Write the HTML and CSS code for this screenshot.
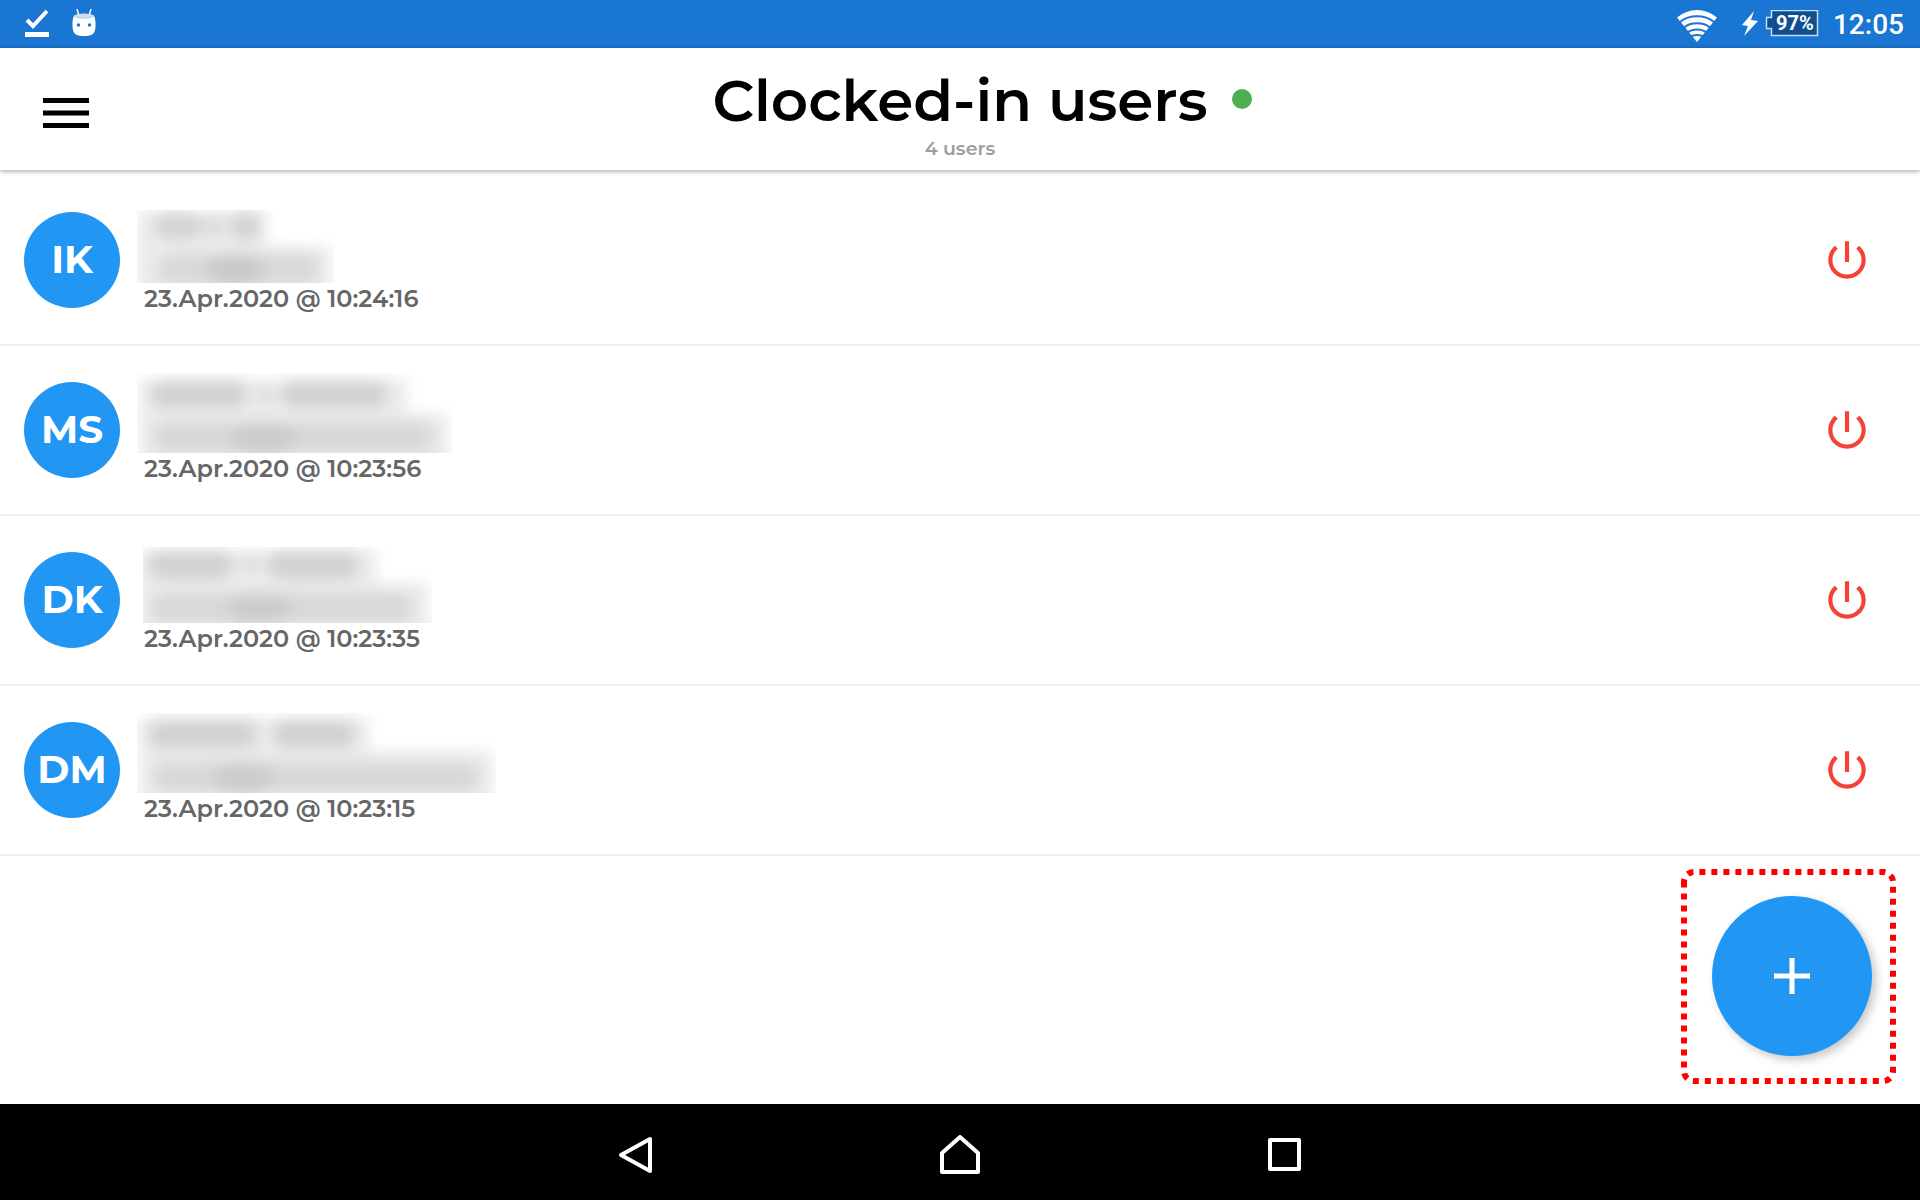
FILE: index.html
```html
<!DOCTYPE html>
<html lang="en">
<head>
<meta charset="utf-8">
<meta name="viewport" content="width=device-width, initial-scale=1">
<title>Clocked-in users</title>
<link rel="stylesheet" href="styles.css">
</head>
<body>
<div class="status-bar">
  <div class="status-group notifications">
    <svg width="24" height="28" viewBox="0 0 24 28" aria-hidden="true"><path d="M2 11l6 6L22 2" fill="none" stroke="#fff" stroke-width="4"/><path d="M0 23h24v5H0z" fill="#fff"/></svg>
    <svg width="24" height="28" viewBox="0 0 24 28" aria-hidden="true"><path d="M5 0l2 7M19 0l-2 7" stroke="#fff" stroke-width="1.5"/><path d="M3 6Q12 3 21 6Q23 7 23.500 13Q24 22 21 25Q18 27 12 27Q6 27 3 25Q0 22 .5 13Q1 7 3 6z" fill="#fff"/><ellipse cx="12" cy="7.500" rx="9.500" ry="2.500" fill="#c5dcf5"/><circle cx="6.500" cy="16" r="1.700" fill="#1976d2"/><circle cx="17.500" cy="16" r="1.700" fill="#1976d2"/></svg>
  </div>
  <div class="status-group system">
    <svg class="wifi" width="40" height="32" viewBox="0 0 40 32" aria-hidden="true"><path d="M20 32L0 7.500Q9 0 20 0t20 7.500z" fill="#fff"/><path d="M3 12Q10 6.300 20 6.300T37 12M7 17.500Q12 13.300 20 13.300T33 17.500M10 23Q14 19.500 20 19.500T30 23M13 27Q16 25 20 25T27 27" fill="none" stroke="#1976d2" stroke-width="2"/></svg>
    <svg class="bolt" width="16" height="26" viewBox="0 0 16 26" aria-hidden="true"><path d="M12 0L0 14l6 1L2 25 16 10l-7-1z" fill="#fff"/></svg>
    <div class="battery">
      <svg width="54" height="27" viewBox="0 0 54 27" aria-hidden="true"><path d="M6.500.5h46v25h-46v-7h-5v-11h5z" fill="#0f4f8f" stroke="#c5dcf5" stroke-width="1.500"/></svg>
      <span class="battery-level">97%</span>
    </div>
    <time class="clock">12:05</time>
  </div>
</div>

<header class="app-bar">
  <button class="icon-button menu" type="button" aria-label="Menu">
    <svg width="46" height="30" viewBox="0 0 46 30" aria-hidden="true"><path d="M0 0h46v5H0zM0 12.500h46v5H0zM0 25h46v5H0z"/></svg>
  </button>
  <h1 class="title">Clocked-in users</h1>
  <span class="online-dot" role="img" aria-label="Online"></span>
  <p class="subtitle">4 users</p>
</header>

<main class="content">
  <svg class="defs" width="0" height="0" aria-hidden="true"><filter id="soft" x="-20%" y="-40%" width="140%" height="180%" color-interpolation-filters="sRGB"><feGaussianBlur stdDeviation="7"/></filter></svg>
  <ul class="users">
    <li class="user">
      <span class="avatar">IK</span>
      <div class="details">
        <svg class="hidden-name" width="197" height="73" viewBox="0 0 197 73" role="img" aria-label="Name hidden"><g filter="url(#soft)"><path d="M0 0h130v36h64v50H0z" fill="#ebebeb"/><ellipse cx="42" cy="16" rx="26" ry="14" fill="#d4d4d4"/><ellipse cx="78" cy="16" rx="7" ry="12" fill="#d8d8d8"/><ellipse cx="108" cy="16" rx="15" ry="14" fill="#d2d2d2"/><rect x="20" y="44" width="162" height="30" rx="14" fill="#d9d9d9"/><ellipse cx="98" cy="60" rx="30" ry="16" fill="#cacaca"/></g></svg>
        <time class="stamp">23.Apr.2020 @ 10:24:16</time>
      </div>
      <button class="icon-button power" type="button" aria-label="Clock out IK"><svg width="50" height="50" viewBox="0 0 24 24" aria-hidden="true"><path d="M13 3h-2v10h2V3zm4.830 2.170l-1.420 1.420C17.990 7.860 19 9.810 19 12c0 3.870-3.130 7-7 7s-7-3.130-7-7c0-2.190 1.010-4.140 2.580-5.420L6.170 5.170C4.230 6.820 3 9.260 3 12c0 4.970 4.030 9 9 9s9-4.030 9-9c0-2.740-1.230-5.180-3.170-6.830z"/></svg></button>
    </li>
    <li class="user">
      <span class="avatar">MS</span>
      <div class="details">
        <svg class="hidden-name" width="315" height="80" viewBox="0 0 315 80" role="img" aria-label="Name hidden"><g filter="url(#soft)"><path d="M2 6h268v34h42v54H2z" fill="#ebebeb"/><rect x="14" y="7" width="96" height="28" rx="14" fill="#d2d2d2"/><ellipse cx="129" cy="21" rx="6" ry="9" fill="#d8d8d8"/><rect x="144" y="7" width="106" height="28" rx="14" fill="#d2d2d2"/><rect x="16" y="49" width="280" height="30" rx="14" fill="#d8d8d8"/><ellipse cx="126" cy="66" rx="34" ry="16" fill="#cccccc"/></g></svg>
        <time class="stamp">23.Apr.2020 @ 10:23:56</time>
      </div>
      <button class="icon-button power" type="button" aria-label="Clock out MS"><svg width="50" height="50" viewBox="0 0 24 24" aria-hidden="true"><path d="M13 3h-2v10h2V3zm4.830 2.170l-1.420 1.420C17.990 7.860 19 9.810 19 12c0 3.870-3.130 7-7 7s-7-3.130-7-7c0-2.190 1.010-4.140 2.580-5.420L6.170 5.170C4.230 6.820 3 9.260 3 12c0 4.970 4.030 9 9 9s9-4.030 9-9c0-2.740-1.230-5.180-3.170-6.830z"/></svg></button>
    </li>
    <li class="user">
      <span class="avatar">DK</span>
      <div class="details">
        <svg class="hidden-name inset" width="289" height="76" viewBox="0 0 289 76" role="img" aria-label="Name hidden"><g filter="url(#soft)"><path d="M-6 2h240v34h52v54H-6z" fill="#ebebeb"/><rect x="6" y="4" width="84" height="28" rx="14" fill="#d2d2d2"/><ellipse cx="107" cy="18" rx="6" ry="9" fill="#d8d8d8"/><rect x="124" y="4" width="92" height="28" rx="14" fill="#d2d2d2"/><rect x="8" y="46" width="262" height="30" rx="14" fill="#d8d8d8"/><ellipse cx="116" cy="62" rx="32" ry="16" fill="#cccccc"/></g></svg>
        <time class="stamp">23.Apr.2020 @ 10:23:35</time>
      </div>
      <button class="icon-button power" type="button" aria-label="Clock out DK"><svg width="50" height="50" viewBox="0 0 24 24" aria-hidden="true"><path d="M13 3h-2v10h2V3zm4.830 2.170l-1.420 1.420C17.990 7.860 19 9.810 19 12c0 3.870-3.130 7-7 7s-7-3.130-7-7c0-2.190 1.010-4.140 2.580-5.420L6.170 5.170C4.230 6.820 3 9.260 3 12c0 4.970 4.030 9 9 9s9-4.030 9-9c0-2.740-1.230-5.180-3.170-6.830z"/></svg></button>
    </li>
    <li class="user">
      <span class="avatar">DM</span>
      <div class="details">
        <svg class="hidden-name" width="359" height="80" viewBox="0 0 359 80" role="img" aria-label="Name hidden"><g filter="url(#soft)"><path d="M2 4h230v34h124v56H2z" fill="#ebebeb"/><rect x="12" y="7" width="108" height="28" rx="14" fill="#d2d2d2"/><rect x="136" y="7" width="82" height="28" rx="14" fill="#d2d2d2"/><rect x="16" y="49" width="326" height="30" rx="14" fill="#d8d8d8"/><ellipse cx="106" cy="65" rx="30" ry="16" fill="#cccccc"/></g></svg>
        <time class="stamp">23.Apr.2020 @ 10:23:15</time>
      </div>
      <button class="icon-button power" type="button" aria-label="Clock out DM"><svg width="50" height="50" viewBox="0 0 24 24" aria-hidden="true"><path d="M13 3h-2v10h2V3zm4.830 2.170l-1.420 1.420C17.990 7.860 19 9.810 19 12c0 3.870-3.130 7-7 7s-7-3.130-7-7c0-2.190 1.010-4.140 2.580-5.420L6.170 5.170C4.230 6.820 3 9.260 3 12c0 4.970 4.030 9 9 9s9-4.030 9-9c0-2.740-1.230-5.180-3.170-6.830z"/></svg></button>
    </li>
  </ul>
  <div class="add-area">
    <svg class="add-outline" width="215" height="215" viewBox="0 0 215 215" aria-hidden="true"><path d="M3 16V13A10 10 0 0 1 13 3H202A10 10 0 0 1 212 13V202A10 10 0 0 1 202 212H13A10 10 0 0 1 3 202V16" fill="none" stroke="#f00" stroke-width="6" stroke-dasharray="6 6"/></svg>
    <button class="fab" type="button" aria-label="Clock in user"><svg width="36" height="36" viewBox="0 0 36 36" aria-hidden="true"><path d="M15.500 0h5v15.500H36v5H20.500V36h-5V20.500H0v-5h15.500z" fill="#fff"/></svg></button>
  </div>
</main>

<nav class="nav-bar" aria-label="System">
  <button class="icon-button" type="button" aria-label="Back"><svg width="40" height="40" viewBox="0 0 40 40" aria-hidden="true"><path d="M36 4v32L7 20z"/></svg></button>
  <button class="icon-button" type="button" aria-label="Home"><svg width="40" height="40" viewBox="0 0 40 40" aria-hidden="true"><path d="M20 2l18 16v19H2V18z"/></svg></button>
  <button class="icon-button" type="button" aria-label="Recent apps"><svg width="40" height="40" viewBox="0 0 40 40" aria-hidden="true"><path d="M4 5h29v29H4z"/></svg></button>
</nav>
</body>
</html>
```
FILE: styles.css
```css
* {
  box-sizing: border-box;
}

body {
  margin: 0;
  min-height: 100vh;
  display: flex;
  flex-direction: column;
  background: #fff;
  color: #000;
  font-family: Montserrat, Inter, "Open Sans", sans-serif;
}

svg {
  display: block;
}

.icon-button {
  display: flex;
  align-items: center;
  justify-content: center;
  padding: 0;
  border: 0;
  background: none;
  cursor: pointer;
}

/* Status bar */
.status-bar {
  display: flex;
  justify-content: space-between;
  height: 48px;
  padding: 0 16px 0 25px;
  background: #1976d2;
  color: #fff;
  font-family: Roboto, sans-serif;
  font-weight: 500;
}

.status-group {
  display: flex;
  align-items: center;
}

.notifications {
  gap: 23px;
  padding-bottom: 2px;
}

.wifi {
  margin: 4px 25px 0 0;
}

.bolt {
  margin-right: 7px;
}

.battery {
  display: grid;
  margin-right: 14px;
  padding-bottom: 2px;
}

.battery > * {
  grid-area: 1 / 1;
}

.battery-level {
  padding-left: 11px;
  font-size: 20px;
  line-height: 26px;
  font-weight: 700;
}

.clock {
  font-size: 28px;
  line-height: 48px;
  padding-top: 2px;
}

/* App bar */
.app-bar {
  display: grid;
  grid-template-columns: 1fr auto 1fr;
  grid-template-rows: 72px 24px;
  align-items: center;
  padding: 17px 43px 9px;
  box-shadow: 0 1px 5px rgba(0, 0, 0, 0.4);
  z-index: 1;
}

.menu {
  grid-row: 1 / 3;
  justify-self: start;
}

.title {
  grid-column: 2;
  margin: 0;
  font-size: 58px;
  line-height: 72px;
  font-weight: 600;
}

.online-dot {
  width: 20px;
  height: 20px;
  margin: 0 0 4px 24px;
  border-radius: 50%;
  background: #4caf50;
}

.subtitle {
  grid-column: 2;
  margin: 0;
  color: #9e9e9e;
  font-size: 19px;
  line-height: 24px;
  font-weight: 600;
  text-align: center;
}

/* User list */
.content {
  position: relative;
  flex: 1;
  padding-top: 6px;
}

.defs {
  position: absolute;
}

.users {
  margin: 0;
  padding: 0;
  list-style: none;
}

.user {
  display: flex;
  align-items: center;
  height: 170px;
  padding: 0 48px 0 24px;
  border-bottom: 2px solid #eee;
}

.avatar {
  flex: none;
  width: 96px;
  height: 96px;
  border-radius: 50%;
  background: #2196f3;
  color: #fff;
  font-size: 39px;
  line-height: 95px;
  font-weight: 700;
  text-align: center;
}

.details {
  flex: 1;
  align-self: flex-end;
  padding: 0 0 29px 17px;
}

.inset {
  margin-left: 6px;
}

.stamp {
  display: block;
  padding-left: 7px;
  color: #666;
  font-size: 24px;
  line-height: 32px;
  font-weight: 600;
}

.power {
  fill: #f44336;
}

/* Add button */
.add-area {
  position: absolute;
  right: 24px;
  bottom: 20px;
  padding: 27px 24px 28px 31px;
}

.add-outline {
  position: absolute;
  top: 0;
  left: 0;
}

.fab {
  display: flex;
  align-items: center;
  justify-content: center;
  width: 160px;
  height: 160px;
  padding: 0;
  border: 0;
  border-radius: 50%;
  background: #2196f3;
  box-shadow: 4px 4px 10px rgba(0, 0, 0, 0.22);
  cursor: pointer;
}

/* System navigation */
.nav-bar {
  display: flex;
  justify-content: center;
  height: 96px;
  padding-top: 6px;
  background: #000;
}

.nav-bar .icon-button {
  width: 17%;
}

.nav-bar svg {
  fill: none;
  stroke: #fff;
  stroke-width: 4;
  stroke-linejoin: round;
}
```
